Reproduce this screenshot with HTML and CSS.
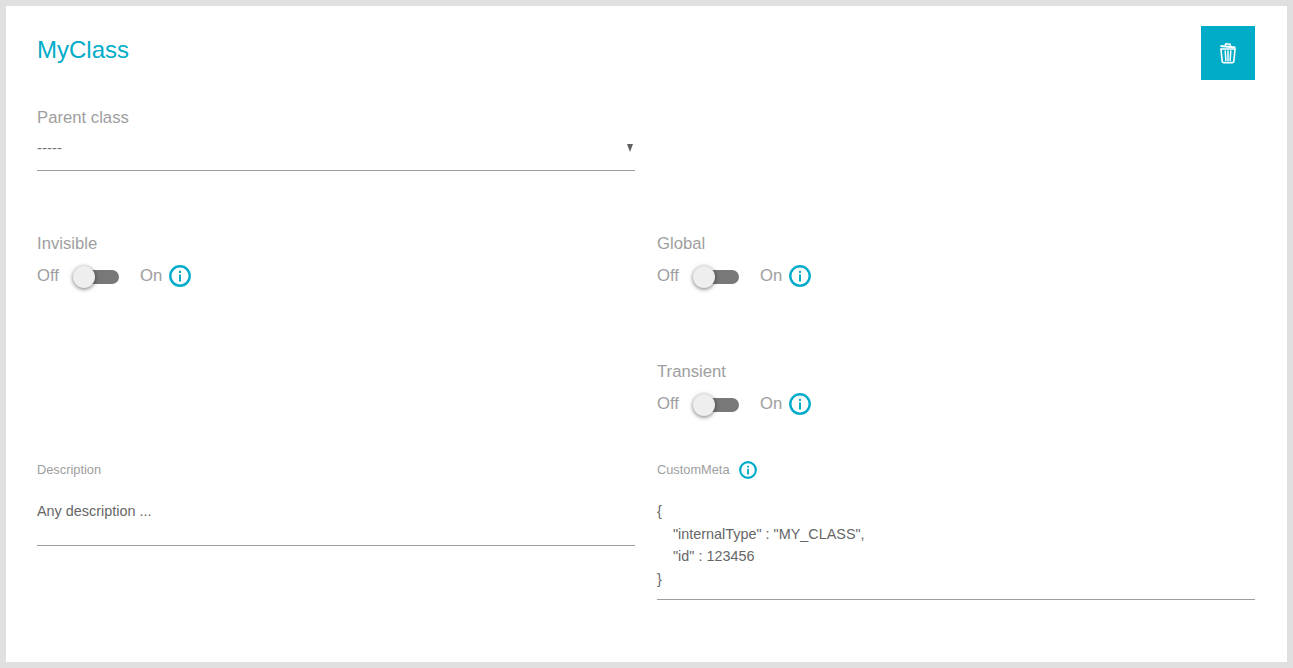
FILE: index.html
```html
<!DOCTYPE html>
<html lang="en">
<head>
<meta charset="utf-8">
<title>MyClass</title>
<link rel="stylesheet" href="styles.css">
</head>
<body>
<main class="card">
  <header class="head">
    <h1 class="title">MyClass</h1>
    <button class="trash" type="button" aria-label="Delete">
      <svg width="18" height="22" viewBox="0 0 18 22" fill="none" stroke="#fff">
        <path d="M1.5 4 L16.5 5.6" stroke-width="2"/>
        <path d="M6 3.6 L6.8 1.8 L11 2.2 L11.6 4.2" stroke-width="1.5"/>
        <path d="M2 7 H16 L14.8 19.5 Q14.7 20.6 13.6 20.6 H4.4 Q3.3 20.6 3.2 19.5 Z" stroke-width="1.6"/>
        <path d="M6.2 8.5 L6.9 19 M9 8.5 V19 M11.8 8.5 L11.1 19" stroke-width="1.5"/>
      </svg>
    </button>
  </header>

  <section class="parent">
    <div class="label">Parent class</div>
    <div class="select"><span>-----</span><span class="arrow"></span></div>
  </section>

  <section class="grid toggles">
    <div class="stack">
      <div class="toggle">
        <div class="label">Invisible</div>
        <div class="switch-row">
          <span>Off</span><span class="switch"><span class="knob"></span></span><span>On</span>
          <svg class="info" width="22" height="22" viewBox="0 0 22 22"><circle cx="11" cy="11" r="9.7" fill="none" stroke="#00acc8" stroke-width="2.4"/><rect x="10" y="9.5" width="2" height="7" fill="#00acc8"/><rect x="10" y="5.8" width="2" height="2.2" fill="#00acc8"/></svg>
        </div>
      </div>
    </div>
    <div class="stack">
      <div class="toggle">
        <div class="label">Global</div>
        <div class="switch-row">
          <span>Off</span><span class="switch"><span class="knob"></span></span><span>On</span>
          <svg class="info" width="22" height="22" viewBox="0 0 22 22"><circle cx="11" cy="11" r="9.7" fill="none" stroke="#00acc8" stroke-width="2.4"/><rect x="10" y="9.5" width="2" height="7" fill="#00acc8"/><rect x="10" y="5.8" width="2" height="2.2" fill="#00acc8"/></svg>
        </div>
      </div>
      <div class="toggle">
        <div class="label">Transient</div>
        <div class="switch-row">
          <span>Off</span><span class="switch"><span class="knob"></span></span><span>On</span>
          <svg class="info" width="22" height="22" viewBox="0 0 22 22"><circle cx="11" cy="11" r="9.7" fill="none" stroke="#00acc8" stroke-width="2.4"/><rect x="10" y="9.5" width="2" height="7" fill="#00acc8"/><rect x="10" y="5.8" width="2" height="2.2" fill="#00acc8"/></svg>
        </div>
      </div>
    </div>
  </section>

  <section class="grid texts">
    <div>
      <div class="small-label">Description</div>
      <div class="area desc">Any description ...</div>
    </div>
    <div>
      <div class="small-label">CustomMeta
        <svg class="info-small" width="18" height="18" viewBox="0 0 22 22"><circle cx="11" cy="11" r="9.6" fill="none" stroke="#00acc8" stroke-width="2.6"/><rect x="10" y="9.5" width="2.2" height="7" fill="#00acc8"/><rect x="10" y="5.8" width="2.2" height="2.2" fill="#00acc8"/></svg>
      </div>
      <pre class="area meta">{
    "internalType" : "MY_CLASS",
    "id" : 123456
}</pre>
    </div>
  </section>
</main>
</body>
</html>
```
FILE: styles.css
```css
* { box-sizing: border-box; }
html, body { height: 100%; }
body {
  margin: 0;
  padding: 6px;
  background: #e0e0e0;
  font-family: "Liberation Sans", Arial, sans-serif;
  overflow: hidden;
}
.card {
  background: #fff;
  height: 656px;
  padding: 20px 32px 0 31px;
}
.head {
  display: flex;
  justify-content: space-between;
  align-items: flex-start;
  height: 54px;
}
.title {
  margin: 0;
  padding-top: 9px;
  font-size: 24px;
  line-height: 30px;
  font-weight: 400;
  color: #00acc8;
}
.trash {
  width: 54px;
  height: 54px;
  border: 0;
  padding: 0;
  background: #00acc8;
  display: flex;
  align-items: center;
  justify-content: center;
}
.parent { width: 598px; margin-top: 27px; }
.label {
  font-size: 16.7px;
  line-height: 22px;
  color: #9e9e9e;
}
.select {
  display: flex;
  justify-content: space-between;
  align-items: center;
  height: 42px;
  padding: 0 1px 4px 0;
  border-bottom: 1px solid #9e9e9e;
  font-size: 15px;
  color: #757575;
}
.arrow {
  width: 0;
  height: 0;
  border-left: 3.5px solid transparent;
  border-right: 3.5px solid transparent;
  border-top: 8px solid #616161;
  margin-right: 1px;
}
.grid {
  display: grid;
  grid-template-columns: 598px 598px;
  column-gap: 22px;
}
.toggles { margin-top: 62px; }
.stack { display: flex; flex-direction: column; gap: 72px; }
.toggle { height: 56px; }
.switch-row {
  display: flex;
  align-items: center;
  height: 42px;
  padding-bottom: 1px;
  font-size: 16.7px;
  color: #9e9e9e;
}
.switch {
  position: relative;
  width: 36px;
  height: 14px;
  margin: 2px 21px 0 24px;
  border-radius: 7px;
  background: #787878;
  flex: none;
}
.knob {
  position: absolute;
  left: -10px;
  top: -4px;
  width: 22px;
  height: 22px;
  border-radius: 50%;
  background: #eeeeee;
  box-shadow: 0 1px 4px rgba(0, 0, 0, .55);
}
.info { margin-left: 7px; margin-top: 1px; flex: none; }
.texts { margin-top: 41px; }
.small-label {
  display: flex;
  align-items: center;
  gap: 9px;
  height: 22px;
  font-size: 12.8px;
  color: #9e9e9e;
}
.info-small { flex: none; margin-top: 2px; }
.area {
  margin: 0;
  border-bottom: 1px solid #9e9e9e;
  font-family: inherit;
  font-size: 14.4px;
  line-height: 22.5px;
  color: #666666;
  white-space: pre;
}
.desc { height: 66px; padding-top: 20px; }
.meta { height: 120px; padding-top: 20px; }
```
